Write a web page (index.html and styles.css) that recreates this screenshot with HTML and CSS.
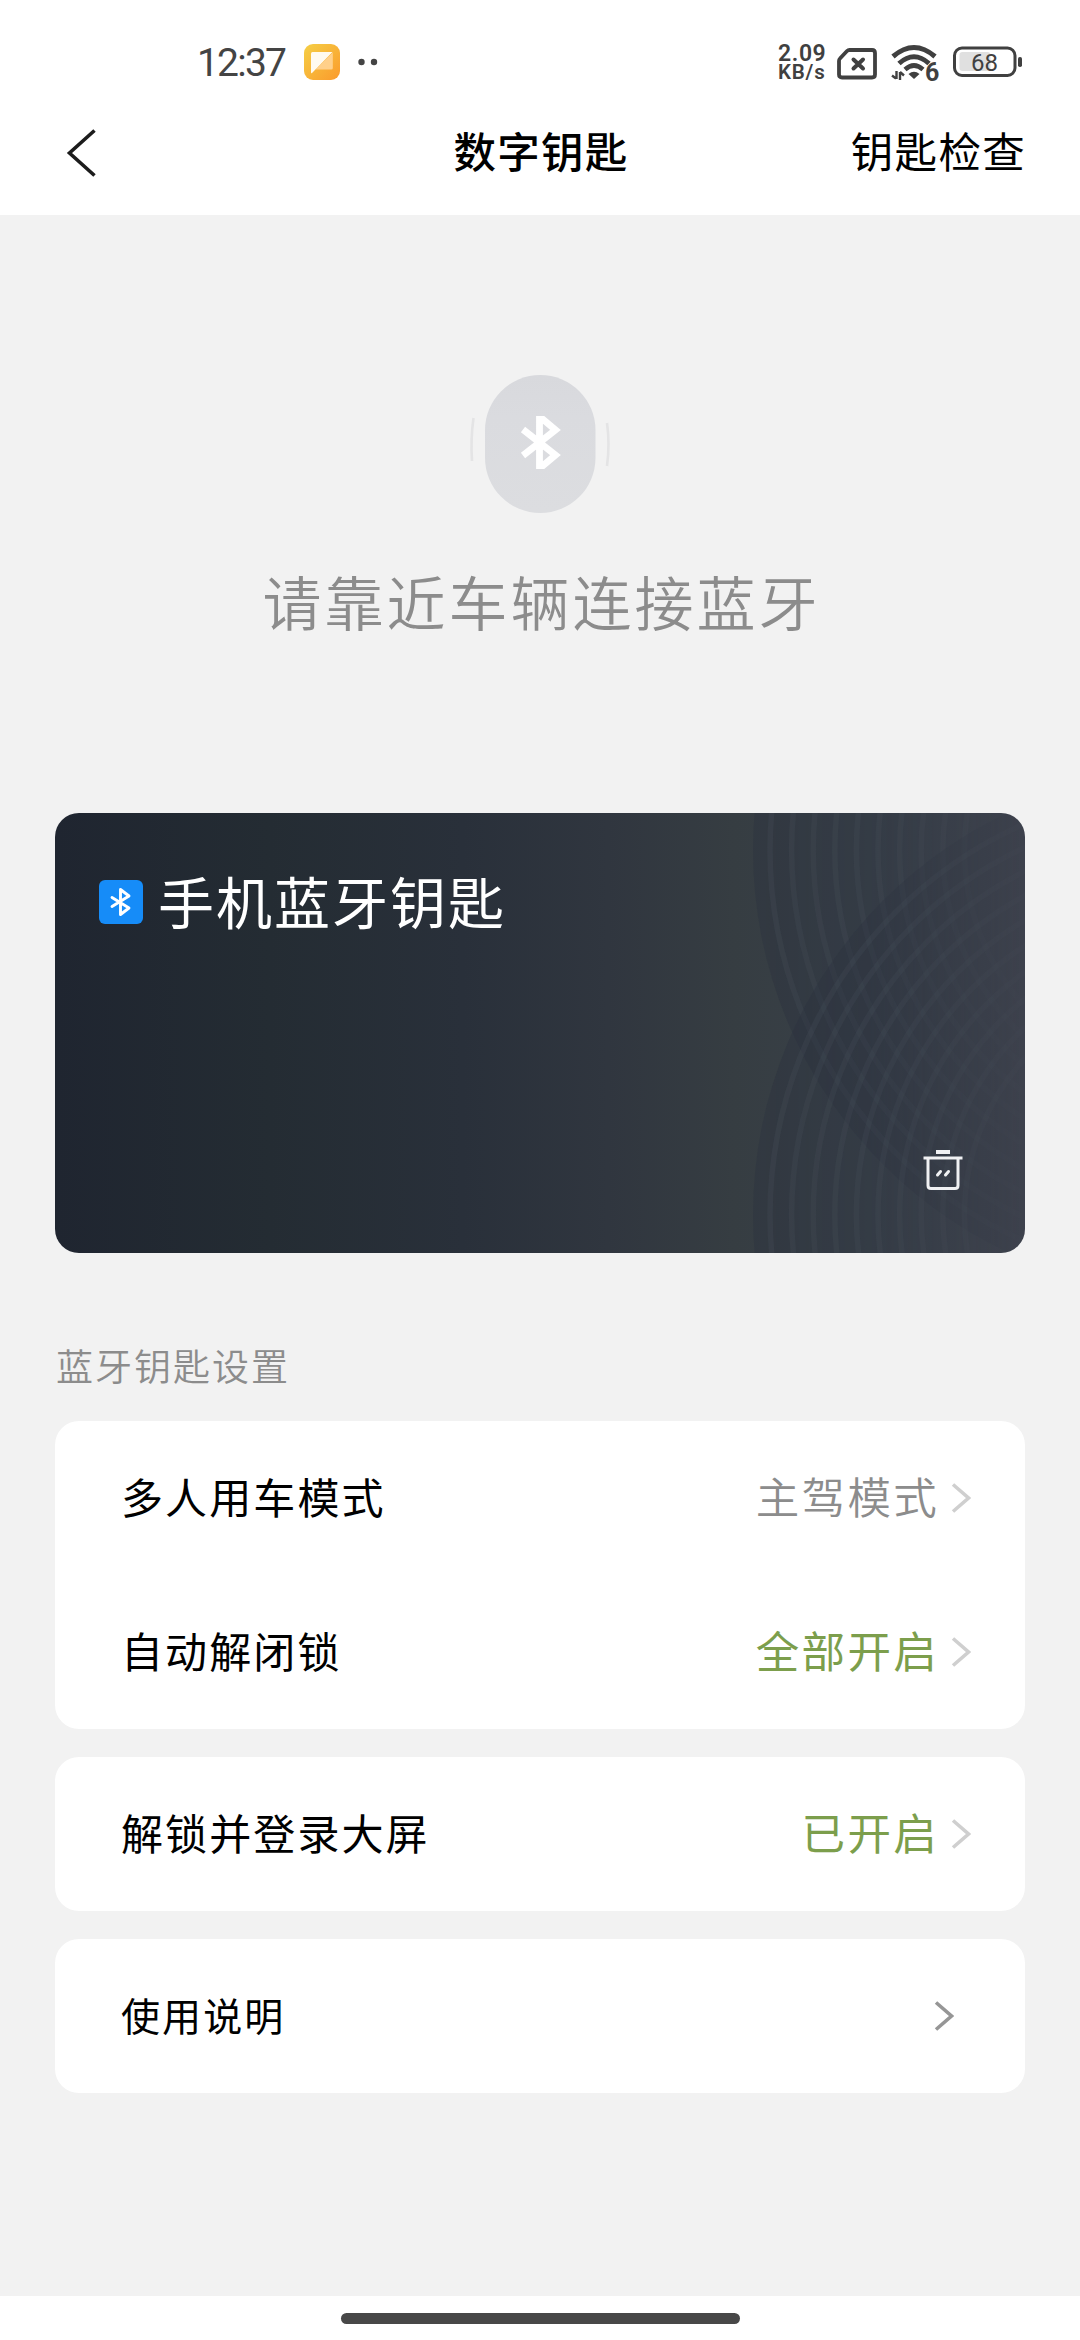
FILE: index.html
```html
<!DOCTYPE html>
<html lang="zh-CN">
<head>
<meta charset="utf-8">
<title>数字钥匙</title>
<link rel="stylesheet" href="styles.css">
</head>
<body>
<div class="screen">
  <div class="statusbar">
    <span class="clock">12:37</span>
    <svg class="app-icon" width="36" height="36" viewBox="0 0 36 36">
      <defs>
        <linearGradient id="appBg" x1="0" y1="0" x2="1" y2="1">
          <stop offset="0" stop-color="#f5cf45"/><stop offset="1" stop-color="#fb9a2c"/>
        </linearGradient>
      </defs>
      <rect width="36" height="36" rx="9" fill="url(#appBg)"/>
      <path d="M28.800 8.500V24q0 1.500-1.500 1.500H11.500z" fill="#ffd08a"/>
      <path d="M7 9.500q0-1.500 1.500-1.500H28.500L8 29q-1 .6-1-.8z" fill="#fffaf0"/>
    </svg>
    <svg class="dots" width="20" height="8" viewBox="0 0 20 8"><circle cx="3.500" cy="4" r="3.200" fill="#444"/><circle cx="16" cy="4" r="3.200" fill="#444"/></svg>
    <div class="status-right">
      <div class="speed"><span class="speed-num">2.09</span><span class="speed-unit">KB/s</span></div>
      <svg class="sim" width="40" height="32" viewBox="0 0 40 32" fill="none" stroke="#404040">
        <path d="M12.500 2H35q3 0 3 3V26.500q0 3-3 3H5q-3 0-3-3V13q0-1.500 1-2.500L10 3q1-1 2.500-1z" stroke-width="3.800"/>
        <path d="M16.500 11.500l9.500 9M26 11.500l-9.500 9" stroke-width="4" stroke-linecap="round"/>
      </svg>
      <svg class="wifi" width="50" height="38" viewBox="0 0 50 38" fill="none" stroke="#404040">
        <path d="M2 11.500Q23 -6.500 44 11.500" stroke-width="5"/>
        <path d="M8 18.500Q23 5 38 18.500" stroke-width="5"/>
        <path d="M14 24.500Q23 16.500 32 24.500" stroke-width="4.600"/>
        <path d="M17.500 29Q23 24.500 28.500 29L23 34z" fill="#404040" stroke="none"/>
        <path d="M5.500 26v8M1 30.500l4 3M9 35v-8M13 30.500l-4-3.500" stroke-width="2.400"/>
        <text x="34" y="36" class="wifi-six">6</text>
      </svg>
      <svg class="battery" width="70" height="32" viewBox="0 0 70 32">
        <rect x="6.500" y="6" width="31" height="19" rx="3" fill="#e0e0e0"/>
        <rect x="1.500" y="2" width="60.500" height="27.500" rx="7.500" fill="none" stroke="#404040" stroke-width="3"/>
        <rect x="65" y="11" width="4" height="10" rx="1.800" fill="#404040"/>
        <text x="31.500" y="24.500" text-anchor="middle" class="battery-num">68</text>
      </svg>
    </div>
  </div>

  <div class="navbar">
    <svg class="back" width="32" height="48" viewBox="0 0 32 48"><path d="M30.500 1.500L5.500 24L30.500 46.500" fill="none" stroke="#1c1c1c" stroke-width="3.600"/></svg>
    <div class="nav-title">数字钥匙</div>
    <div class="nav-action">钥匙检查</div>
  </div>

  <div class="content">
    <div class="connect">
      <svg class="pulse" width="150" height="140" viewBox="0 0 150 140">
        <defs>
          <linearGradient id="capsule" x1="0" y1="0" x2="0" y2="1">
            <stop offset="0" stop-color="#d8d9dd"/><stop offset=".3" stop-color="#dadbdf"/><stop offset="1" stop-color="#dcdde0"/>
          </linearGradient>
        </defs>
        <rect x="20" y="1" width="110.500" height="138" rx="55.200" fill="url(#capsule)"/>
        <path d="M8.500 44Q5.500 65 7 87" fill="none" stroke="#e4e4e5" stroke-width="2.600"/>
        <path d="M142 49Q145 70 142 92" fill="none" stroke="#e4e4e5" stroke-width="2.600"/>
        <path d="M58 55.500L90.500 81L78 91.500H74.500V45.500H78L90.500 56L58 81.500" fill="none" stroke="#fff" stroke-width="6.800"/>
      </svg>
      <div class="connect-text">请靠近车辆连接蓝牙</div>
    </div>

    <div class="key-card">
      <svg class="pattern" width="970" height="440" viewBox="0 0 970 440">
        <defs>
          <linearGradient id="fade" x1="690" y1="0" x2="970" y2="0" gradientUnits="userSpaceOnUse">
            <stop offset="0" stop-color="#fff"/><stop offset=".45" stop-color="#fff" stop-opacity=".85"/><stop offset="1" stop-color="#fff" stop-opacity=".2"/>
          </linearGradient>
          <mask id="fadeMask"><rect width="970" height="440" fill="url(#fade)"/></mask>
          <g id="rings">
            <circle r="445" class="disc"/>
            <g class="ring">
              <circle r="428"/><circle r="406.400"/><circle r="384.800"/><circle r="363.200"/><circle r="341.600"/><circle r="320"/><circle r="298.400"/><circle r="276.800"/><circle r="255.200"/><circle r="233.600"/>
            </g>
          </g>
        </defs>
        <g mask="url(#fadeMask)">
          <use href="#rings" x="1143" y="37"/>
          <use href="#rings" x="1143" y="402"/>
        </g>
      </svg>
      <div class="key-head">
        <svg class="bt-badge" width="44" height="44" viewBox="0 0 44 44">
          <rect width="44" height="44" rx="6" fill="#168cf8"/>
          <path d="M13 17.500L30 28L21.500 34.500V9.500L30 16L13 26.500" fill="none" stroke="#fff" stroke-width="2.900" stroke-linejoin="round" stroke-linecap="round"/>
        </svg>
        <span class="key-title">手机蓝牙钥匙</span>
      </div>
      <svg class="trash" width="40" height="40" viewBox="0 0 40 40" fill="none" stroke="#f0f1f3">
        <path d="M13 2H27" stroke-width="4"/>
        <path d="M.5 8H39.500" stroke-width="3.200"/>
        <path d="M5 8V35.500q0 3 3 3H32q3 0 3-3V8" stroke-width="3"/>
        <path d="M14.500 25L17.500 21.500M22.500 25L25.500 21.500" stroke-width="3" stroke-linecap="round"/>
      </svg>
    </div>

    <div class="section-label">蓝牙钥匙设置</div>

    <div class="groups">
      <div class="group">
        <div class="row">
          <span class="row-label">多人用车模式</span>
          <span class="row-value">主驾模式</span>
          <svg class="chevron" width="20" height="30" viewBox="0 0 20 30"><path d="M2 1.500L17.500 15L2 28.500"/></svg>
        </div>
        <div class="row">
          <span class="row-label">自动解闭锁</span>
          <span class="row-value on">全部开启</span>
          <svg class="chevron" width="20" height="30" viewBox="0 0 20 30"><path d="M2 1.500L17.500 15L2 28.500"/></svg>
        </div>
      </div>
      <div class="group">
        <div class="row">
          <span class="row-label">解锁并登录大屏</span>
          <span class="row-value on">已开启</span>
          <svg class="chevron" width="20" height="30" viewBox="0 0 20 30"><path d="M2 1.500L17.500 15L2 28.500"/></svg>
        </div>
      </div>
      <div class="group">
        <div class="row row-help">
          <span class="row-label">使用说明</span>
          <svg class="chevron" width="20" height="30" viewBox="0 0 20 30"><path d="M2 1.500L17.500 15L2 28.500"/></svg>
        </div>
      </div>
    </div>
  </div>

  <div class="home-area"><div class="home-bar"></div></div>
</div>
</body>
</html>
```
FILE: styles.css
```css
* { box-sizing: border-box; }
body {
  margin: 0;
  background: #fff;
  color: #000;
  font-family: "Noto Sans CJK SC", sans-serif;
}
svg { display: block; flex: none; }
.screen {
  width: 1080px;
  height: 2340px;
  display: flex;
  flex-direction: column;
  overflow: hidden;
}

/* status bar */
.statusbar {
  height: 124px;
  padding: 0 57px 0 197px;
  display: flex;
  align-items: center;
  flex: none;
}
.clock {
  width: 107px;
  font: 400 39px/46px Roboto, sans-serif;
  letter-spacing: -1.8px;
  padding-top: 2px;
  color: #444;
}
.dots { margin-left: 18px; }
.status-right {
  margin-left: auto;
  display: flex;
  align-items: center;
}
.speed {
  width: 59px;
  display: flex;
  flex-direction: column;
  font-family: Roboto, sans-serif;
  font-weight: 600;
  color: #404040;
  padding-top: 1px;
}
.speed-num { font-size: 23px; line-height: 19px; letter-spacing: .6px; }
.speed-unit { font-size: 20.500px; line-height: 18px; letter-spacing: .8px; }
.sim { margin-top: 3px; }
.wifi { margin: 4px 0 0 14px; overflow: visible; }
.battery { margin-left: 12px; }
.wifi-six { font: 700 25px Roboto, sans-serif; fill: #404040; stroke: none; }
.battery-num { font: 400 24px Roboto, sans-serif; fill: #404040; }

/* navigation bar */
.navbar {
  height: 91px;
  padding: 0 54px 34px 64px;
  display: grid;
  grid-template-columns: 1fr auto 1fr;
  align-items: center;
  flex: none;
}
.nav-title, .nav-action {
  font-size: 42.500px;
  line-height: 52px;
  letter-spacing: 1.300px;
  padding-bottom: 5px;
}
.nav-title { font-weight: 500; padding-right: 8px; }
.nav-action { justify-self: end; font-weight: 400; }

.content {
  flex: 1;
  background: #f2f2f2;
  padding: 159px 55px 0;
}
.connect {
  display: flex;
  flex-direction: column;
  align-items: center;
}
.connect-text {
  margin-top: 47px;
  font-size: 59px;
  line-height: 80px;
  letter-spacing: 3px;
  padding-left: 3px;
  font-weight: 350;
  color: #8c8c8c;
}

/* key card */
.key-card {
  position: relative;
  height: 440px;
  margin-top: 172px;
  padding: 49px 62px 63px 44px;
  border-radius: 24px;
  overflow: hidden;
  display: flex;
  flex-direction: column;
  justify-content: space-between;
  background: linear-gradient(90deg, #1f2530 0%, #242c33 22%, #29303a 42%, #30363f 57%, #363d42 70%, #394149 84%, #40444f 100%);
}
.pattern { position: absolute; inset: 0; }
.disc { fill: rgba(40, 48, 62, .34); }
.ring { fill: none; stroke: rgba(80, 88, 100, .2); stroke-width: 5.500; }
.key-head {
  position: relative;
  display: flex;
  align-items: center;
  gap: 15px;
}
.bt-badge { margin-top: 4px; }
.key-title {
  font-size: 56px;
  line-height: 76px;
  letter-spacing: 2px;
  color: #fff;
}
.trash { position: relative; align-self: flex-end; }

/* settings */
.section-label {
  margin-top: 85px;
  padding-left: 1px;
  font-size: 37px;
  line-height: 54px;
  letter-spacing: 2px;
  font-weight: 350;
  color: #8c8c8c;
}
.groups {
  margin-top: 29px;
  display: flex;
  flex-direction: column;
  gap: 28px;
}
.group { background: #fff; border-radius: 24px; }
.row {
  height: 154px;
  padding: 0 54px 0 66px;
  display: flex;
  align-items: center;
}
.row-label {
  flex: 1;
  font-size: 42px;
  letter-spacing: 2.100px;
  padding-bottom: 5px;
}
.row-value {
  font-size: 43.500px;
  letter-spacing: 2.300px;
  margin-right: 12px;
  padding-bottom: 5px;
  font-weight: 350;
  color: #8c8c8c;
}
.on { color: #7c9e4c; font-weight: 400; }
.chevron path { fill: none; stroke: #cfcfcf; stroke-width: 3.600; }
.row-help { padding-right: 71px; }
.row-help .row-label { font-size: 39px; }
.row-help .chevron path { stroke: #969696; }

/* gesture area */
.home-area {
  height: 44px;
  padding-top: 17px;
  display: flex;
  justify-content: center;
  flex: none;
}
.home-bar {
  width: 399px;
  height: 11px;
  border-radius: 6px;
  background: #484848;
}
```
